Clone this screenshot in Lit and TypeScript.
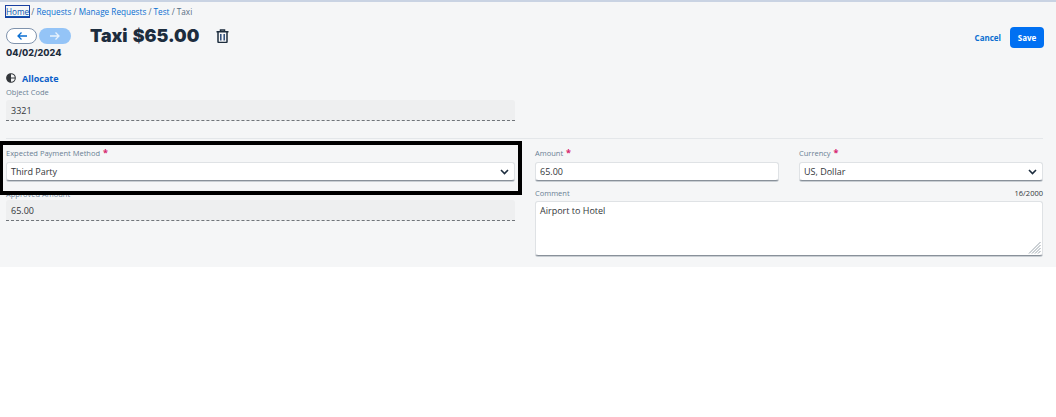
import { LitElement, html, css } from "lit";
import { customElement } from "lit/decorators.js";

@customElement("app-root")
export class AppRoot extends LitElement {
  static styles = css`
    :host { display: block; width: 1056px; height: 417px; background: #fff; font-family: "Open Sans", "Noto Sans", sans-serif; color: #32363a; overflow: hidden; }
    .page { position: relative; height: 267px; box-sizing: border-box; background: #f5f6f7; border-top: 2px solid #c9d3e3; padding: 0 12px 0 6px; }
    .crumbs { display: flex; align-items: center; height: 18px; font-size: 8.2px; color: #556b82; white-space: pre; }
    .crumbs a { color: #0a6ed1; }
    .crumbs .home { color: #0a55b0; outline: 1px solid #1a3fa0; text-decoration: underline; }
    .head { display: flex; height: 39px; }
    .nav-col { width: 84px; }
    .navs { display: flex; gap: 2px; margin-top: 8px; }
    .nav { width: 32px; height: 16px; box-sizing: border-box; border-radius: 8px; display: flex; align-items: center; justify-content: center; }
    .nav.on { width: 31px; background: #fff; border: 1px solid #7f93ad; }
    .nav.off { background: #94c4f7; }
    .date { font-family: "Inter", sans-serif; font-size: 9px; font-weight: 800; color: #1d2d3e; margin-top: 3px; line-height: 12px; }
    .title { font-family: "Inter", sans-serif; font-size: 17.8px; font-weight: 900; word-spacing: 1.5px; color: #1d2d3e; line-height: 24px; margin-top: 4px; }
    .trash { margin: 9px 0 0 17px; }
    .spacer { flex: 1; }
    .cancel { font-size: 8px; font-weight: 700; color: #0a6ed1; margin: 12px 9px 0 0; line-height: 12px; }
    .save { width: 34px; height: 21px; margin-top: 7px; border-radius: 4px; background: #0070f2; color: #fff; font-size: 8px; font-weight: 700; display: flex; align-items: center; justify-content: center; }
    .allocate { display: flex; align-items: center; gap: 6px; height: 12px; margin-top: 13px; font-size: 9px; font-weight: 700; color: #0a5ec9; }
    .label { font-size: 7.5px; line-height: 11px; color: #6a7f94; white-space: nowrap; }
    .label b { color: #d6246e; font-weight: 700; font-size: 9px; line-height: 8px; margin-left: 1px; }
    .readonly { height: 21px; width: 509px; box-sizing: border-box; background: #eeeff0; border-bottom: 1px dashed #70757a; border-radius: 3px 3px 0 0; font-size: 9px; padding-left: 5px; display: flex; align-items: center; color: #32363a; }
    .object { margin-top: 3px; }
    .object .readonly { margin-top: 2px; }
    .rule { height: 1px; background: #e4e7ea; margin: 17px 0 0 0; width: 1037px; }
    .cols { display: flex; gap: 20px; }
    .left { width: 509px; }
    .right { width: 508px; display: grid; grid-template-columns: 244px 244px; column-gap: 20px; }
    .top { padding-top: 9px; }
    .input { height: 19px; box-sizing: border-box; margin-top: 3px; background: #fff; border: 1px solid #dfe2e5; border-bottom: 1px solid #89919a; box-shadow: 0 1px 0 #c9ced3; border-radius: 3px; font-size: 9px; padding: 0 5px 0 4px; display: flex; align-items: center; justify-content: space-between; color: #32363a; }
    .approved { margin-top: 8px; }
    .approved .label { height: 11px; }
    .approved .readonly { margin-top: 0; }
    .comment { grid-column: 1 / 3; margin-top: 7px; }
    .cmt-head { display: flex; justify-content: space-between; }
    .counter { font-size: 7.5px; line-height: 11px; color: #32363a; }
    .area { position: relative; height: 55px; box-sizing: border-box; margin-top: 2px; background: #fff; border: 1px solid #dfe2e5; border-bottom: 1px solid #89919a; box-shadow: 0 1px 0 #c9ced3; border-radius: 3px; font-size: 9px; padding: 3px 4px; line-height: 12px; color: #32363a; }
    .grip { position: absolute; right: 1px; bottom: 1px; }
    .focus { position: absolute; left: 0; top: 139px; width: 522px; height: 54px; box-sizing: border-box; border: 4px solid #000; border-left-width: 3px; pointer-events: none; }
  `;

  private chevron() {
    return html`<svg width="9" height="6" viewBox="0 0 9 6"><path d="M1 1l3.500 3.500L8 1" fill="none" stroke="#1d2d3e" stroke-width="1.600"/></svg>`;
  }

  render() {
    return html`
      <div class="page">
        <div class="crumbs"><a class="home">Home</a> / <a>Requests</a> / <a>Manage Requests</a> / <a>Test</a> / Taxi</div>
        <div class="head">
          <div class="nav-col">
            <div class="navs">
              <div class="nav on"><svg width="12" height="10" viewBox="0 0 12 10"><path d="M11 5H2M5.500 1.500L2 5l3.500 3.500" fill="none" stroke="#0a6ed1" stroke-width="1.300"/></svg></div>
              <div class="nav off"><svg width="12" height="10" viewBox="0 0 12 10"><path d="M1 5h9M6.500 1.500L10 5 6.500 8.500" fill="none" stroke="#e8f2fd" stroke-width="1.300"/></svg></div>
            </div>
            <div class="date">04/02/2024</div>
          </div>
          <div class="title">Taxi $65.00</div>
          <svg class="trash" width="13" height="14" viewBox="0 0 13 14"><path d="M.5 2.800h12M4.500 2.800V1h4v1.800M2 2.800v9.700a1 1 0 0 0 1 1h7a1 1 0 0 0 1-1V2.800" fill="none" stroke="#1d2d3e" stroke-width="1.500"/><path d="M4.800 5v6.500M8.200 5v6.500" fill="none" stroke="#2b4a78" stroke-width="1.500"/></svg>
          <div class="spacer"></div>
          <div class="cancel">Cancel</div>
          <div class="save">Save</div>
        </div>
        <div class="allocate">
          <svg width="10" height="10" viewBox="0 0 10 10"><circle cx="5" cy="5" r="4.300" fill="none" stroke="#32363a" stroke-width="1.100"/><path d="M5 .7A4.300 4.300 0 0 0 5 9.300Z" fill="#32363a"/><path d="M5 5h4" stroke="#32363a"/></svg>
          <span>Allocate</span>
        </div>
        <div class="object">
          <div class="label">Object Code</div>
          <div class="readonly">3321</div>
        </div>
        <div class="rule"></div>
        <div class="cols">
          <div class="left top">
            <div class="label">Expected Payment Method <b>*</b></div>
            <div class="input">Third Party ${this.chevron()}</div>
            <div class="approved">
              <div class="label">Approved Amount</div>
              <div class="readonly">65.00</div>
            </div>
          </div>
          <div class="right top">
            <div>
              <div class="label">Amount <b>*</b></div>
              <div class="input">65.00</div>
            </div>
            <div>
              <div class="label">Currency <b>*</b></div>
              <div class="input">US, Dollar ${this.chevron()}</div>
            </div>
            <div class="comment">
              <div class="cmt-head"><div class="label">Comment</div><div class="counter">16/2000</div></div>
              <div class="area">Airport to Hotel
                <svg class="grip" width="13" height="13" viewBox="0 0 13 13"><path d="M12.500 1L1 12.500M12.500 4L4 12.500M12.500 7L7 12.500M12.500 10L10 12.500" stroke="#7f8b96" stroke-width=".8"/></svg>
              </div>
            </div>
          </div>
        </div>
        <div class="focus"></div>
      </div>
    `;
  }
}
